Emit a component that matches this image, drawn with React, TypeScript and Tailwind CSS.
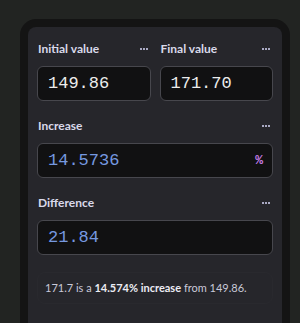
import React from "react";

const Dots = () => (
  <div className="flex gap-[1px] mr-[3px]">
    <span className="w-[2px] h-[2px] bg-[#a9a9c4]" />
    <span className="w-[2px] h-[2px] bg-[#a9a9c4]" />
    <span className="w-[2px] h-[2px] bg-[#a9a9c4]" />
  </div>
);

const Label = ({ text }: { text: string }) => (
  <div className="flex items-center justify-between h-[16px] pl-[1px]">
    <span className="text-[12px] font-bold text-[#d9d9ea]" style={{ fontFamily: "Lato, 'Noto Sans', sans-serif" }}>
      {text}
    </span>
    <Dots />
  </div>
);

const Input = ({ value, color, suffix }: { value: string; color: string; suffix?: boolean }) => (
  <div className="h-[35px] rounded-[6px] border border-[#47474d] bg-[#111112] flex items-center justify-between pl-[10px] pr-[9px]">
    <span className={`text-[17px] ${color}`} style={{ fontFamily: "'Liberation Mono', monospace" }}>
      {value}
    </span>
    {suffix && <span className="text-[13px] font-bold text-[#c77de6]" style={{ fontFamily: "'Liberation Mono', monospace" }}>%</span>}
  </div>
);

export default function App() {
  return (
    <div className="w-[300px] h-[323px] bg-[#222422] overflow-hidden pt-[19px] pl-[20px]">
      <div className="w-[270px] h-[330px] bg-[#141414] rounded-t-[16px] pt-[8px] px-[8px]">
        <div className="h-[320px] bg-[#26262b] rounded-[8px] px-[9px] pt-[14px]">
          <div className="flex gap-[9px]">
            <div className="flex-1 flex flex-col gap-[9px]">
              <Label text="Initial value" />
              <Input value="149.86" color="text-[#ececec]" />
            </div>
            <div className="flex-1 flex flex-col gap-[9px]">
              <Label text="Final value" />
              <Input value="171.70" color="text-[#ececec]" />
            </div>
          </div>
          <div className="flex flex-col gap-[9px] mt-[17px]">
            <Label text="Increase" />
            <Input value="14.5736" color="text-[#7699e0]" suffix />
          </div>
          <div className="flex flex-col gap-[9px] mt-[17px]">
            <Label text="Difference" />
            <Input value="21.84" color="text-[#7699e0]" />
          </div>
          <div className="mt-[17px] h-[32px] rounded-[8px] border border-[#29292e] flex items-center pl-[7px]">
            <span className="text-[11px] text-[#c9c9d8]" style={{ fontFamily: "Lato, 'Noto Sans', sans-serif" }}>
              171.7 is a <b className="font-bold text-[#ececf4]">14.574% increase</b> from 149.86.
            </span>
          </div>
        </div>
      </div>
    </div>
  );
}
